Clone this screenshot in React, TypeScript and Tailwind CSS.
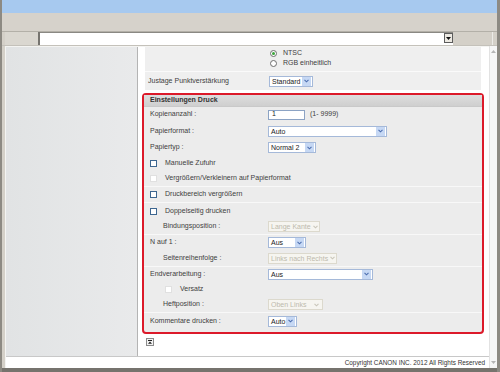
import React from "react";

function Arrow({ disabled }: { disabled?: boolean }) {
  return (
    <span
      className={`flex h-full w-[9px] shrink-0 items-center justify-center ${
        disabled ? "" : "bg-[#c6d8f4]"
      }`}
    >
      <svg width="5" height="4" viewBox="0 0 5 4">
        <path
          d="M0.5 0.8 L2.5 2.8 L4.5 0.8"
          fill="none"
          stroke={disabled ? "#c9c6ba" : "#4d6fb0"}
          strokeWidth="1.1"
        />
      </svg>
    </span>
  );
}

function Select({
  value,
  className,
  disabled,
}: {
  value: string;
  className: string;
  disabled?: boolean;
}) {
  return (
    <div
      className={`flex h-[11px] items-center justify-between border pl-[2px] pr-px ${className} ${
        disabled
          ? "border-[#dcd9cd] bg-[#f6f5f0] text-[#bdbaad]"
          : "border-[#a5b9d9] bg-white text-[#222]"
      }`}
    >
      <span className="leading-none whitespace-nowrap">{value}</span>
      <span className="flex h-[9px] items-center">
        <Arrow disabled={disabled} />
      </span>
    </div>
  );
}

function Check({ disabled }: { disabled?: boolean }) {
  return (
    <span
      className={`inline-block h-[7px] w-[7px] shrink-0 border bg-white ${
        disabled ? "border-[#e0e0e0]" : "border-[#3d6690]"
      }`}
    />
  );
}

function Row({
  label,
  h,
  indent,
  children,
}: {
  label: string;
  h: string;
  indent?: boolean;
  children?: React.ReactNode;
}) {
  return (
    <div className={`flex items-center ${h}`}>
      <span
        className={`shrink-0 whitespace-nowrap ${
          indent ? "w-[124px] pl-[19px]" : "w-[124px] pl-[6px]"
        }`}
      >
        {label}
      </span>
      {children}
    </div>
  );
}

function CheckRow({
  label,
  h,
  disabled,
  indent,
}: {
  label: string;
  h: string;
  disabled?: boolean;
  indent?: boolean;
}) {
  return (
    <div
      className={`flex items-center gap-[8px] ${h} ${
        indent ? "pl-[21px]" : "pl-[6px]"
      }`}
    >
      <Check disabled={disabled} />
      <span className="whitespace-nowrap">{label}</span>
    </div>
  );
}

export default function App() {
  return (
    <div
      className="flex h-[372px] w-[500px] flex-col overflow-hidden border-l-2 border-r-[3px] border-[#8d8a83] bg-[#d4d0c8] text-[7px] text-[#404040]"
      style={{ fontFamily: '"Liberation Sans", Arial, sans-serif' }}
    >
      {/* title bar */}
      <div className="h-[13px] shrink-0 bg-[#a7c9ef]" />
      <div className="h-[19px] shrink-0 border-b border-[#b3b0a8] bg-[#d6d2cb]" />

      {/* address row */}
      <div className="flex h-[14px] shrink-0 items-stretch border-b border-[#c4c1ba] pl-[3px]">
        <div className="w-[35px] border-r-2 border-[#76746f] bg-[#dad7d0]" />
        <div className="flex w-[413px] border-t border-[#8a8883] bg-white">
          <div className="flex-1" />
          <div className="mb-[2px] flex w-[9px] items-center justify-center border border-[#5c5c5c] bg-[#ece9e2]">
            <svg width="5" height="3" viewBox="0 0 5 3">
              <path d="M0 0 H5 L2.5 3 Z" fill="#111" />
            </svg>
          </div>
        </div>
        <div className="flex-1 border-r border-[#ecebe7]" />
        <div className="w-[4px]" />
      </div>

      {/* main frame */}
      <div className="flex min-h-0 flex-1 pl-[3px]">
        <div className="flex min-w-0 flex-1 flex-col border-l border-t border-[#f4f4f2]">
          <div className="flex min-h-0 flex-1">
            {/* left panel */}
            <div className="w-[132px] shrink-0 border-r border-[#b4b4b4] bg-gradient-to-r from-[#e1e3e4] to-[#e9eaeb]" />

            {/* content */}
            <div className="flex min-w-0 flex-1 flex-col bg-white pl-[4px] pr-[5px]">
              <div className="mx-[3px] flex flex-col bg-[#efefef]">
                <div className="flex h-[24px] flex-col justify-start pl-[124px] pt-px">
                  <div className="flex h-[10px] items-center gap-[6px] pl-px">
                    <span className="flex h-[7px] w-[7px] items-center justify-center rounded-full border border-[#6d6d6d] bg-white">
                      <span className="h-[3px] w-[3px] rounded-full bg-[#3aa43a]" />
                    </span>
                    <span>NTSC</span>
                  </div>
                  <div className="flex h-[11px] items-center gap-[6px] pl-px">
                    <span className="h-[7px] w-[7px] rounded-full border border-[#6d6d6d] bg-white" />
                    <span>RGB einheitlich</span>
                  </div>
                </div>
                <div className="flex h-[19px] items-center border-t border-[#fafafa]">
                  <span className="w-[124px] shrink-0 pl-[3px]">
                    Justage Punktverstärkung
                  </span>
                  <Select value="Standard" className="w-[44px]" />
                </div>
              </div>

              {/* red box */}
              <div className="mt-[3px] rounded-[4px] border-2 border-[#dc1a2a] bg-[#ececec]">
                <div className="flex h-[12px] items-center border-b border-[#c9c9c9] bg-gradient-to-b from-[#dedede] to-[#cfcfcf] pl-[6px] font-bold text-[#333]">
                  Einstellungen Druck
                </div>

                <div className="flex flex-col">
                  <Row label="Kopienanzahl :" h="h-[15px]">
                    <div className="flex h-[10px] w-[37px] items-center border border-[#8ca3c4] bg-white pl-[3px] text-[#222]">
                      1
                    </div>
                    <span className="ml-[5px]">(1- 9999)</span>
                  </Row>
                  <Row label="Papierformat :" h="h-[18px]">
                    <Select value="Auto" className="w-[119px]" />
                  </Row>
                  <Row label="Papiertyp :" h="h-[15px]">
                    <Select value="Normal 2" className="w-[48px]" />
                  </Row>
                  <CheckRow label="Manuelle Zufuhr" h="h-[16px]" />
                  <CheckRow
                    label="Vergrößern/Verkleinern auf Papierformat"
                    h="h-[15px]"
                    disabled
                  />
                </div>

                <div className="border-t border-[#f8f8f8]">
                  <CheckRow label="Druckbereich vergrößern" h="h-[15px]" />
                </div>

                <div className="border-t border-[#f8f8f8]">
                  <CheckRow label="Doppelseitig drucken" h="h-[16px]" />
                  <Row label="Bindungsposition :" h="h-[15px]" indent>
                    <Select value="Lange Kante" className="w-[52px]" disabled />
                  </Row>
                </div>

                <div className="border-t border-[#f8f8f8]">
                  <Row label="N auf 1 :" h="h-[15px]">
                    <Select value="Aus" className="w-[38px]" />
                  </Row>
                  <Row label="Seitenreihenfolge :" h="h-[16px]" indent>
                    <Select
                      value="Links nach Rechts"
                      className="w-[69px]"
                      disabled
                    />
                  </Row>
                </div>

                <div className="border-t border-[#f8f8f8]">
                  <Row label="Endverarbeitung :" h="h-[14px]">
                    <Select value="Aus" className="w-[105px]" />
                  </Row>
                  <CheckRow label="Versatz" h="h-[16px]" indent disabled />
                  <Row label="Heftposition :" h="h-[15px]" indent>
                    <Select value="Oben Links" className="w-[55px]" disabled />
                  </Row>
                </div>

                <div className="border-t border-[#f8f8f8] pb-[3px]">
                  <Row label="Kommentare drucken :" h="h-[16px]">
                    <Select value="Auto" className="w-[29px]" />
                  </Row>
                </div>
              </div>

              <div className="mt-[4px] pl-[4px]">
                <svg width="8" height="8" viewBox="0 0 8 8">
                  <rect x="0.5" y="0.5" width="7" height="7" fill="#f2f2f2" stroke="#8a8a8a" />
                  <rect x="2" y="2" width="4" height="1" fill="#222" />
                  <path d="M4 3.5 L6 5.8 H2 Z" fill="#222" />
                </svg>
              </div>
            </div>
          </div>

          {/* footer */}
          <div className="flex h-[12px] shrink-0 items-center justify-end border-t border-[#c8c8c8] bg-white pr-[4px] text-[6.4px] text-[#333]">
            Copyright CANON INC. 2012 All Rights Reserved
          </div>
        </div>

        {/* scrollbar */}
        <div className="flex w-[8px] shrink-0 flex-col items-center justify-between border-l border-[#e2e2e2] bg-[#f6f6f6] py-[4px]">
          <svg width="5" height="3" viewBox="0 0 5 3">
            <path d="M2.5 0 L5 3 H0 Z" fill="#b5b5b5" />
          </svg>
          <svg width="5" height="3" viewBox="0 0 5 3">
            <path d="M0 0 H5 L2.5 3 Z" fill="#b5b5b5" />
          </svg>
        </div>
      </div>

      <div className="h-[4px] shrink-0 bg-[#76736d]" />
    </div>
  );
}
